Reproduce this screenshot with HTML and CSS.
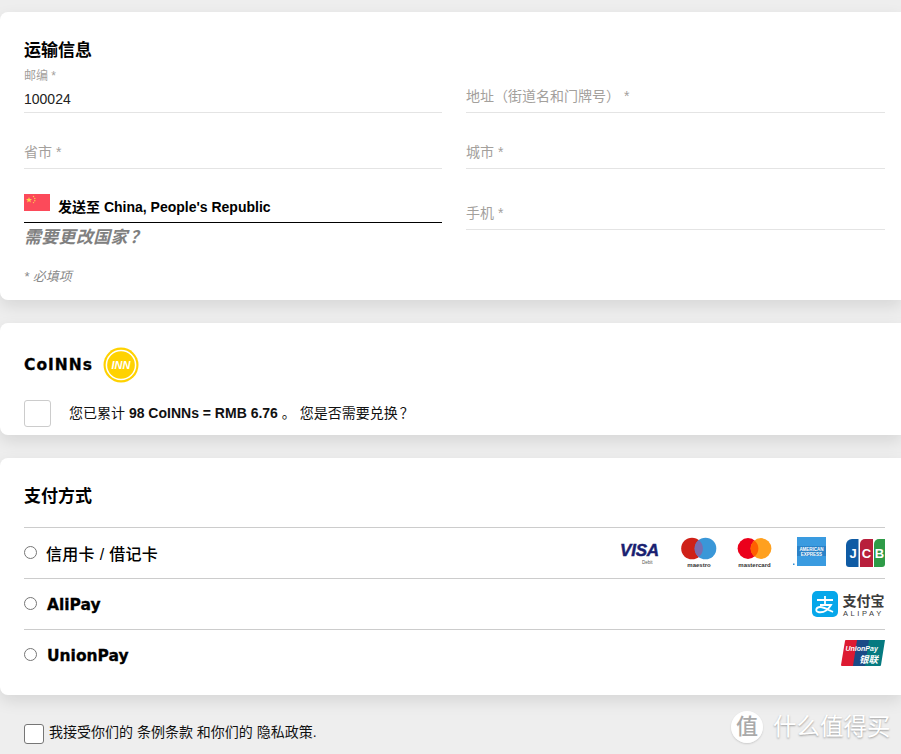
FILE: index.html
```html
<!DOCTYPE html>
<html lang="zh">
<head>
<meta charset="utf-8">
<title>结账</title>
<link rel="stylesheet" href="styles.css">
</head>
<body>
<section class="card card-shipping">
  <h2 class="title">运输信息</h2>
  <div class="form-grid">
    <div class="col">
      <div class="field field-filled">
        <span class="mini-label">邮编 *</span>
        <span class="value">100024</span>
      </div>
      <div class="field"><span class="placeholder">省市 *</span></div>
      <div class="country">
        <svg class="flag" viewBox="0 0 26 17" aria-hidden="true">
          <rect width="26" height="17" fill="#fc4a5a"/>
          <polygon points="5,3 5.8,5 8,5.1 6.3,6.4 6.9,8.5 5,7.3 3.1,8.5 3.7,6.4 2,5.1 4.2,5" fill="#fbd24e"/>
          <circle cx="9.5" cy="2.5" r=".7" fill="#fbd24e"/>
          <circle cx="10.8" cy="4.5" r=".7" fill="#fbd24e"/>
          <circle cx="10.8" cy="6.8" r=".7" fill="#fbd24e"/>
          <circle cx="9.5" cy="8.6" r=".7" fill="#fbd24e"/>
        </svg>
        <span class="ship-to">发送至 China, People's Republic</span>
      </div>
      <a class="change-country">需要更改国家<span class="centered-punct">？</span></a>
      <p class="required">* 必填项</p>
    </div>
    <div class="col">
      <div class="field"><span class="placeholder">地址（街道名和门牌号） *</span></div>
      <div class="field"><span class="placeholder">城市 *</span></div>
      <div class="field field-tall"><span class="placeholder">手机 *</span></div>
    </div>
  </div>
</section>

<section class="card card-coins">
  <div class="coin-head">
    <h2 class="title-black">CoINNs</h2>
    <svg class="coin" viewBox="0 0 36 36" aria-hidden="true">
      <circle cx="18" cy="18" r="17.5" fill="#ffd200"/>
      <circle cx="18" cy="18" r="14.6" fill="none" stroke="#fff" stroke-width="1.5"/>
      <text x="18" y="22" text-anchor="middle" class="coin-text">INN</text>
    </svg>
  </div>
  <div class="coin-row">
    <span class="box box-large"></span>
    <p class="coin-copy">您已累计 <b>98 CoINNs = RMB 6.76</b> 。 您是否需要兑换<span class="centered-punct">？</span></p>
  </div>
</section>

<section class="card card-pay">
  <h2 class="title title-pay">支付方式</h2>
  <div class="pay-row">
    <span class="radio"></span>
    <span class="pay-label pay-label-cjk">信用卡 / 借记卡</span>
    <div class="logos">
      <svg class="logo-visa" viewBox="0 0 41 22" aria-hidden="true">
        <text x="0" y="14" class="visa-text">VISA</text>
        <text x="22" y="21.500" class="visa-sub">Debit</text>
      </svg>
      <svg class="logo-card" viewBox="0 0 36 32" aria-hidden="true">
        <circle cx="11" cy="11.500" r="10.800" fill="#cf2118"/>
        <circle cx="24.500" cy="11.500" r="10.800" fill="#3a97d8"/>
        <path d="M17.750 3a10.800 10.800 0 0 1 0 17a10.800 10.800 0 0 1 0-17z" fill="#7a6db0"/>
        <text x="18" y="30" text-anchor="middle" class="card-sub">maestro</text>
      </svg>
      <svg class="logo-card" viewBox="0 0 36 32" aria-hidden="true">
        <circle cx="11" cy="11.500" r="10.400" fill="#eb001b"/>
        <circle cx="24" cy="11.500" r="10.400" fill="#ffa01e"/>
        <path d="M17.500 3.400a10.400 10.400 0 0 1 0 16.200a10.400 10.400 0 0 1 0-16.200z" fill="#ff5f00"/>
        <text x="17.500" y="29.500" text-anchor="middle" class="card-sub">mastercard</text>
      </svg>
      <svg class="logo-amex" viewBox="0 0 33 29" aria-hidden="true">
        <rect x="4" width="29" height="29" fill="#3a9be0"/>
        <rect x="4" y="9" width="29" height="10" fill="#2a82c8"/>
        <text x="18.500" y="13.500" text-anchor="middle" class="amex-text">AMERICAN</text>
        <text x="18.500" y="18.500" text-anchor="middle" class="amex-text">EXPRESS</text>
        <rect x="0" y="26.500" width="1.500" height="1.500" fill="#2f90d8"/>
      </svg>
      <svg class="logo-jcb" viewBox="0 0 39 28" aria-hidden="true">
        <path d="M6 0h6.500v28H3a3 3 0 0 1-3-3V6a6 6 0 0 1 6-6z" fill="#0f5ba4"/>
        <path d="M19 0h8v28H14V5a5 5 0 0 1 5-5z" fill="#b81f3c"/>
        <path d="M33 0h6v25a3 3 0 0 1-3 3h-8V5a5 5 0 0 1 5-5z" fill="#2e9b47"/>
        <text x="7" y="19" text-anchor="middle" class="jcb-text">J</text>
        <text x="20.500" y="19" text-anchor="middle" class="jcb-text">C</text>
        <text x="33.500" y="19" text-anchor="middle" class="jcb-text">B</text>
      </svg>
    </div>
  </div>
  <div class="pay-row">
    <span class="radio"></span>
    <span class="pay-label">AliPay</span>
    <div class="logos">
      <svg class="logo-alipay" viewBox="0 0 73 26" aria-hidden="true">
        <rect width="26" height="26" rx="5" fill="#06a7ea"/>
        <path d="M5 9h16M13 5v9M8 14h11c-3 5-8 8-13 7c-3-1-2-5 2-5c4 0 9 3 13 5" fill="none" stroke="#fff" stroke-width="1.800"/>
        <text x="30.500" y="15" class="ali-cn">支付宝</text>
        <text x="31" y="25" class="ali-en">ALIPAY</text>
      </svg>
    </div>
  </div>
  <div class="pay-row">
    <span class="radio"></span>
    <span class="pay-label">UnionPay</span>
    <div class="logos">
      <svg class="logo-union" viewBox="0 0 44 26" aria-hidden="true">
        <path d="M5 0h13l-4 26H1a1 1 0 0 1-1-1L4 1a1 1 0 0 1 1-1z" fill="#dd1a32"/>
        <path d="M16 0h14l-4 26H12z" fill="#1b4a86"/>
        <path d="M28 0h16l-4 25a1 1 0 0 1-1 1H24z" fill="#057a80"/>
        <text x="4.500" y="10.500" class="union-en">UnionPay</text>
        <text x="18" y="23" class="union-cn">银联</text>
      </svg>
    </div>
  </div>
</section>

<div class="terms">
  <span class="box box-small"></span>
  <p class="terms-copy">我接受你们的 条例条款 和你们的 隐私政策.</p>
</div>

<div class="watermark">
  <span class="wm-badge">值</span>
  <span class="wm-text">什么值得买</span>
</div>
</body>
</html>
```
FILE: styles.css
```css
* { box-sizing: border-box; }
html, body { margin: 0; padding: 0; }
body {
  position: relative;
  width: 901px;
  height: 754px;
  overflow: hidden;
  background: #eee;
  color: #000;
  padding-top: 12px;
  font-family: "Liberation Sans", "Noto Sans CJK SC", sans-serif;
  font-size: 14px;
}
.card {
  background: #fff;
  border-radius: 8px 0 0 8px;
  box-shadow: 0 6px 16px rgba(0, 0, 0, .1);
  padding-left: 24px;
  padding-right: 16px;
  margin-bottom: 23px;
}
.card-shipping { height: 288px; padding-top: 28px; }
.title {
  margin: 0;
  font-size: 17px;
  line-height: 22px;
  font-weight: 700;
}
.form-grid {
  display: grid;
  grid-template-columns: 418px 419px;
  column-gap: 24px;
  margin-top: -1px;
}
.col { display: flex; flex-direction: column; }
.field {
  height: 52px;
  margin-bottom: 4px;
  border-bottom: 1px solid #e4e4e4;
  display: flex;
  flex-direction: column;
  justify-content: flex-end;
  padding-bottom: 8px;
}
.field-filled { padding-bottom: 5px; }
.field-tall { height: 57px; }
.placeholder { color: #a3a09c; font-size: 14px; line-height: 16px; }
.mini-label { color: #a3a09c; font-size: 12px; line-height: 14px; margin-bottom: 8px; }
.value { color: #222; font-size: 14px; line-height: 16px; }
.country {
  height: 50px;
  display: flex;
  align-items: flex-end;
  border-bottom: 1px solid #000;
  padding-bottom: 7px;
}
.flag { width: 26px; height: 17px; margin-right: 8px; margin-bottom: 4px; flex: none; }
.ship-to { font-size: 14px; line-height: 16px; font-weight: 700; }
.centered-punct { font-family: "Noto Sans CJK TC", sans-serif; padding-left: 2px; }
.change-country {
  margin-top: 3px;
  color: #808080;
  font-size: 17px;
  line-height: 20px;
  font-weight: 700;
  font-style: italic;
  letter-spacing: .3px;
}
.required {
  margin: 21px 0 0;
  color: #8a8a8a;
  font-size: 13px;
  line-height: 16px;
  font-style: italic;
}
.card-coins { height: 112px; padding-top: 24px; }
.coin-head { display: flex; align-items: center; height: 36px; gap: 10px; }
.title-black {
  margin: 0;
  font-family: "DejaVu Sans", sans-serif;
  font-size: 15.500px;
  line-height: 20px;
  font-weight: 700;
  letter-spacing: 1px;
  -webkit-text-stroke: .3px #000;
}
.coin { width: 36px; height: 36px; }
.coin-text { font: italic 700 11px "Liberation Sans", sans-serif; fill: #fff; }
.coin-row { display: flex; align-items: center; margin-top: 17px; gap: 18px; }
.box { display: block; background: #fff; flex: none; }
.box-large { width: 27px; height: 27px; border: 1px solid #ccc; border-radius: 3px; }
.coin-copy { margin: -3px 0 0; font-size: 14px; line-height: 20px; color: #111; }
.card-pay { height: 237px; padding-top: 28px; }
.title-pay { margin-bottom: 19px; }
.pay-row {
  height: 51px;
  border-top: 1px solid #ccc;
  display: flex;
  align-items: center;
}
.radio {
  width: 13px;
  height: 13px;
  border: 1px solid #767676;
  border-radius: 50%;
  background: #fff;
  flex: none;
  margin-right: 10px;
  margin-top: -1px;
}
.pay-label {
  font-family: "DejaVu Sans", sans-serif;
  font-size: 15.500px;
  font-weight: 700;
  margin-top: 1px;
  -webkit-text-stroke: .3px #000;
}
.pay-label-cjk {
  font-family: "Liberation Sans", "Noto Sans CJK SC", sans-serif;
  font-size: 16px;
  font-weight: 500;
  letter-spacing: .3px;
  margin-top: -1px;
  margin-left: -1px;
  -webkit-text-stroke: 0;
}
.logos { margin-left: auto; display: flex; align-items: center; gap: 20px; }
.logo-visa { width: 41px; height: 22px; }
.logo-card { width: 36px; height: 32px; }
.logo-amex { width: 33px; height: 29px; margin-bottom: 3px; }
.logo-jcb { width: 39px; height: 28px; }
.logo-alipay { width: 73px; height: 26px; }
.logo-union { width: 44px; height: 26px; margin-bottom: 4px; }
.visa-text {
  font: italic 700 17px "Liberation Sans", sans-serif;
  fill: #1a1f71;
  stroke: #1a1f71;
  stroke-width: .5px;
  letter-spacing: -.2px;
}
.visa-sub { font: 4.500px "Liberation Sans", sans-serif; fill: #555; }
.card-sub { font: 700 6px "Liberation Sans", sans-serif; fill: #333; }
.amex-text { font: 700 4.500px "Liberation Sans", sans-serif; fill: #fff; }
.jcb-text { font: 700 13px "Liberation Sans", sans-serif; fill: #fff; }
.ali-cn { font: 700 14px "Noto Sans CJK SC", sans-serif; fill: #3c3c3c; }
.ali-en { font: 7.500px "Liberation Sans", sans-serif; fill: #3c3c3c; letter-spacing: 2.600px; }
.union-en { font: italic 700 7px "Liberation Sans", sans-serif; fill: #fff; }
.union-cn { font: italic 700 9.500px "Noto Sans CJK SC", sans-serif; fill: #fff; }
.terms {
  display: flex;
  align-items: center;
  gap: 5px;
  padding-left: 24px;
  margin-top: 29px;
}
.box-small { width: 20px; height: 20px; border: 1px solid #767676; border-radius: 3px; }
.terms-copy { margin: -4px 0 0; font-size: 14px; line-height: 20px; color: #111; }
.watermark {
  position: absolute;
  left: 731px;
  top: 711px;
  display: flex;
  align-items: center;
  gap: 10px;
  height: 32px;
}
.wm-badge {
  width: 32px;
  height: 32px;
  border-radius: 50%;
  background: rgba(255, 255, 255, .95);
  color: #aaa;
  font-size: 22px;
  line-height: 32px;
  text-align: center;
  font-weight: 500;
  box-shadow: 0 1px 2px rgba(0, 0, 0, .15);
}
.wm-text {
  color: #fff;
  font-size: 23.500px;
  line-height: 32px;
  text-shadow: 0 1px 2px rgba(0, 0, 0, .35);
}
```
